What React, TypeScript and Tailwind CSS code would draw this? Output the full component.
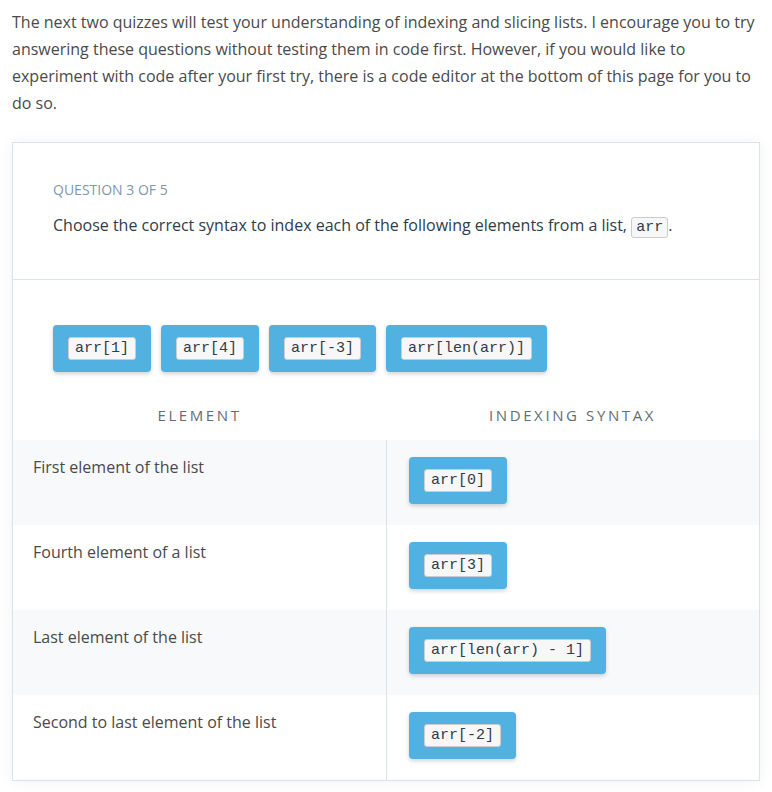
const choices = ["arr[1]", "arr[4]", "arr[-3]", "arr[len(arr)]"];

const rows = [
  { label: "First element of the list", answer: "arr[0]" },
  { label: "Fourth element of a list", answer: "arr[3]" },
  { label: "Last element of the list", answer: "arr[len(arr) - 1]" },
  { label: "Second to last element of the list", answer: "arr[-2]" },
];

function Code({ children }: { children: string }) {
  return (
    <code className="whitespace-pre rounded-[3px] border border-[#c9cdd1] bg-[#f7f7f7] px-[6px] py-[2px] font-['Liberation_Mono','Courier_New',monospace] text-[15px] leading-[17px] text-[#2e3d49]">
      {children}
    </code>
  );
}

function Chip({ text }: { text: string }) {
  return (
    <div className="flex h-[47px] items-center rounded-[4px] bg-[#51b2e1] px-[15px] shadow-[0_2px_4px_rgba(0,0,0,0.18)]">
      <Code>{text}</Code>
    </div>
  );
}

export default function App() {
  return (
    <div className="min-h-screen bg-white font-['Open_Sans','Noto_Sans',sans-serif]">
      <div className="px-3 pt-[9px] pb-4">
        <p className="text-[16px] leading-[27px] text-[#4a4a4a]">
          The next two quizzes will test your understanding of indexing and slicing lists. I encourage you to try
          answering these questions without testing them in code first. However, if you would like to experiment
          with code after your first try, there is a code editor at the bottom of this page for you to do so.
        </p>

        <div className="mt-[25px] border border-[#dbe2e8] bg-white shadow-[0_0_14px_rgba(0,0,0,0.06)]">
          <div className="border-b border-[#dbe2e8] px-10 pt-[37px] pb-[37px]">
            <div className="text-[14px] leading-[19px] uppercase text-[#7d97ad]">Question 3 of 5</div>
            <div className="mt-3 text-[16px] leading-[28px] text-[#2e3d49]">
              Choose the correct syntax to index each of the following elements from a list,{" "}
              <code className="rounded-[3px] border border-[#c9cdd1] bg-[#f7f7f7] px-[4px] py-[1px] font-['Liberation_Mono','Courier_New',monospace] text-[15px] text-[#2e3d49]">
                arr
              </code>
              .
            </div>
          </div>

          <div className="flex gap-[10px] px-10 pt-[45px]">
            {choices.map((c) => (
              <Chip key={c} text={c} />
            ))}
          </div>

          <div className="mt-[32px] grid grid-cols-2 pb-[14px] text-[15px] leading-[22px] tracking-[2.6px] text-[#646d75] uppercase">
            <div className="text-center">Element</div>
            <div className="text-center">Indexing Syntax</div>
          </div>

          <div>
            {rows.map((r, i) => (
              <div
                key={r.label}
                className={`grid h-[85px] grid-cols-2 ${i % 2 === 0 ? "bg-[#f7f9fa]" : "bg-white"}`}
              >
                <div className="px-5 pt-[15px] text-[16px] leading-[24px] text-[#4a4a4a]">{r.label}</div>
                <div className="border-l border-[#dbe2e8] pl-[22px] pt-[17px]">
                  <div className="inline-flex">
                    <Chip text={r.answer} />
                  </div>
                </div>
              </div>
            ))}
          </div>
        </div>
      </div>
    </div>
  );
}
